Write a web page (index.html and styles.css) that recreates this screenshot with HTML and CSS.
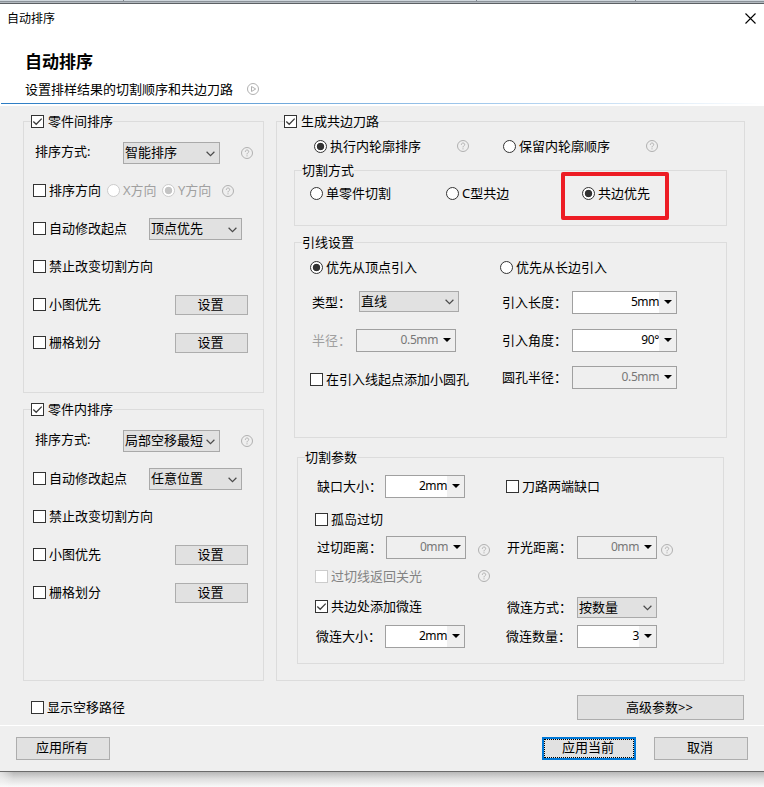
FILE: index.html
```html
<!DOCTYPE html>
<html lang="zh-CN">
<head>
<meta charset="utf-8">
<title>自动排序</title>
<link rel="stylesheet" href="styles.css">
</head>
<body>
<svg class="defs" width="0" height="0">
  <symbol id="help" viewBox="0 0 12 12"><circle cx="6" cy="6" r="5.5" fill="none" stroke="#b0b0b0"/><path d="M4.3 4.8C4.3 2.5 7.7 2.5 7.7 4.6C7.7 5.8 6 5.8 6 7.4M6 8.3V9.4" fill="none" stroke="#b0b0b0"/></symbol>
  <symbol id="tick" viewBox="0 0 11 11"><path d="M1.3 5.5L4.2 8.3L9.7 2.6" fill="none" stroke="#3c3c3c" stroke-width="1.3"/></symbol>
  <symbol id="chev" viewBox="0 0 9 6"><path d="M.6 .8L4.5 4.6L8.4 .8" fill="none" stroke="#4a4a4a" stroke-width="1.2"/></symbol>
</svg>
<div class="backdrop"><i></i><i></i><i></i></div>
<main class="dialog">
  <header class="header">
    <div class="titlebar">
      <span>自动排序</span>
      <svg class="close" viewBox="0 0 11 11"><path d="M.5 .5L10.5 10.5M10.5 .5L.5 10.5" stroke="#000" stroke-width="1.1"/></svg>
    </div>
    <h1>自动排序</h1>
    <p class="subtitle">设置排样结果的切割顺序和共边刀路
      <svg class="play" viewBox="0 0 12 12"><circle cx="6" cy="6" r="5.5" fill="none" stroke="#b0b0b0"/><path d="M4.5 3.5V8.5L8.7 6Z" fill="none" stroke="#b0b0b0"/></svg>
    </p>
    <div class="rule"></div>
  </header>

  <div class="panels">
    <div class="side">
      <section class="group between">
        <div class="legend"><label class="opt"><span class="box"><svg><use href="#tick"/></svg></span>零件间排序</label></div>
        <div class="row sort"><span class="name">排序方式:</span><div class="select"><span>智能排序</span><svg><use href="#chev"/></svg></div><svg class="help"><use href="#help"/></svg></div>
        <div class="row direction"><label class="opt"><span class="box"></span>排序方向</label><label class="opt off"><span class="dot"></span>X方向</label><label class="opt off"><span class="dot on"></span>Y方向</label><svg class="help"><use href="#help"/></svg></div>
        <div class="row start"><label class="opt"><span class="box"></span>自动修改起点</label><div class="select"><span>顶点优先</span><svg><use href="#chev"/></svg></div></div>
        <div class="row"><label class="opt"><span class="box"></span>禁止改变切割方向</label></div>
        <div class="row setup"><label class="opt"><span class="box"></span>小图优先</label><button>设置</button></div>
        <div class="row setup"><label class="opt"><span class="box"></span>栅格划分</label><button>设置</button></div>
      </section>
      <section class="group within">
        <div class="legend"><label class="opt"><span class="box"><svg><use href="#tick"/></svg></span>零件内排序</label></div>
        <div class="row sort"><span class="name">排序方式:</span><div class="select"><span>局部空移最短</span><svg><use href="#chev"/></svg></div><svg class="help"><use href="#help"/></svg></div>
        <div class="row start"><label class="opt"><span class="box"></span>自动修改起点</label><div class="select"><span>任意位置</span><svg><use href="#chev"/></svg></div></div>
        <div class="row"><label class="opt"><span class="box"></span>禁止改变切割方向</label></div>
        <div class="row setup"><label class="opt"><span class="box"></span>小图优先</label><button>设置</button></div>
        <div class="row setup"><label class="opt"><span class="box"></span>栅格划分</label><button>设置</button></div>
      </section>
    </div>

    <section class="group shared">
      <div class="legend"><label class="opt"><span class="box"><svg><use href="#tick"/></svg></span>生成共边刀路</label></div>
      <div class="line contour"><label class="opt"><span class="dot on"></span>执行内轮廓排序</label><svg class="help"><use href="#help"/></svg><label class="opt"><span class="dot"></span>保留内轮廓顺序</label><svg class="help"><use href="#help"/></svg></div>

      <section class="group method">
        <div class="legend"><span>切割方式</span></div>
        <div class="line modes"><label class="opt"><span class="dot"></span>单零件切割</label><label class="opt"><span class="dot"></span>C型共边</label><label class="opt"><span class="dot on"></span>共边优先</label></div>
        <div class="highlight"></div>
      </section>

      <section class="group lead">
        <div class="legend"><span>引线设置</span></div>
        <div class="line entry"><label class="opt"><span class="dot on"></span>优先从顶点引入</label><label class="opt"><span class="dot"></span>优先从长边引入</label></div>
        <div class="line type"><span class="name">类型：</span><div class="select"><span>直线</span><svg><use href="#chev"/></svg></div><span class="name">引入长度：</span><div class="spin"><span>5mm</span><i></i></div></div>
        <div class="line radius"><span class="name off">半径：</span><div class="spin dim"><span>0.5mm</span><i></i></div><span class="name">引入角度：</span><div class="spin"><span>90°</span><i></i></div></div>
        <div class="line hole"><label class="opt"><span class="box"></span>在引入线起点添加小圆孔</label><span class="name">圆孔半径：</span><div class="spin dim"><span>0.5mm</span><i></i></div></div>
      </section>

      <section class="group params">
        <div class="legend"><span>切割参数</span></div>
        <div class="line gap"><span class="name">缺口大小：</span><div class="spin"><span>2mm</span><i></i></div><label class="opt"><span class="box"></span>刀路两端缺口</label></div>
        <div class="line island"><label class="opt"><span class="box"></span>孤岛过切</label></div>
        <div class="line overcut"><span class="name">过切距离：</span><div class="spin dim"><span>0mm</span><i></i></div><svg class="help"><use href="#help"/></svg><span class="name">开光距离：</span><div class="spin dim"><span>0mm</span><i></i></div><svg class="help"><use href="#help"/></svg></div>
        <div class="line return"><label class="opt off dark"><span class="box"></span>过切线返回关光</label><svg class="help"><use href="#help"/></svg></div>
        <div class="line micro"><label class="opt"><span class="box"><svg><use href="#tick"/></svg></span>共边处添加微连</label><span class="name">微连方式：</span><div class="select"><span>按数量</span><svg><use href="#chev"/></svg></div></div>
        <div class="line size"><span class="name">微连大小：</span><div class="spin"><span>2mm</span><i></i></div><span class="name">微连数量：</span><div class="spin"><span>3</span><i></i></div></div>
      </section>
    </section>
  </div>

  <div class="extras"><label class="opt"><span class="box"></span>显示空移路径</label><button>高级参数&gt;&gt;</button></div>
  <footer class="actions"><button>应用所有</button><button class="primary">应用当前</button><button>取消</button></footer>
</main>
<div class="shadow"></div>
</body>
</html>
```
FILE: styles.css
```css
* { box-sizing: border-box; }
body {
  margin: 0;
  width: 764px;
  height: 787px;
  overflow: hidden;
  background: #fff;
  color: #000;
  font: 13px/21px "Noto Sans", "Noto Sans CJK SC", sans-serif;
  white-space: nowrap;
}
.defs { display: none; }
.backdrop {
  height: 4px;
  display: grid;
  grid-template-columns: 124px 353px 159px;
  background: linear-gradient(#cfd6dc 0 1px, #8b9299 1px 2px, #b4bac0 2px 3px, #5c6064 3px);
}
.backdrop i { height: 1px; border-right: 1px solid #7d858c; }
.dialog { height: 768px; background: #efefef; border-bottom: 1px solid #6b6b6b; }

.header { height: 102px; background: #fff; }
.titlebar {
  height: 30px;
  padding: 4px 8px 0 7px;
  display: flex;
  justify-content: space-between;
  font-size: 12px;
}
.close { width: 11px; height: 11px; margin-top: 5px; }
h1 { margin: 18px 0 0 25px; font-size: 17px; line-height: 20px; font-weight: 700; }
.subtitle { margin: 7px 0 0 25px; height: 21px; display: flex; gap: 14px; }
.play { width: 12px; height: 12px; margin-top: 4px; }
.rule { height: 1px; margin: 3px 0 0 1px; background: linear-gradient(90deg, #2b7cc4, #a9cdee 66%, #fff); }

.panels {
  height: 575px;
  padding: 15px 0 0 23px;
  display: grid;
  grid-template-columns: 241px 469px;
  column-gap: 12px;
}
.group { position: relative; border: 1px solid #dcdcdc; }
.between { height: 272px; }
.within { height: 272px; margin-top: 16px; }
.shared { height: 560px; }
.method { height: 56px; margin: 13px 0 0 17px; width: 433px; }
.lead { height: 196px; margin: 16px 0 0 17px; width: 433px; }
.params { height: 207px; margin: 19px 0 0 20px; width: 427px; }

.legend { height: 21px; margin: -11px 0 0 7px; display: flex; }
.legend > * { background: #efefef; }
.legend .opt { gap: 4px; }
.between .legend, .within .legend { margin-bottom: 2px; }

.opt { height: 21px; display: flex; align-items: center; gap: 3px; }
.box { width: 13px; height: 13px; border: 1px solid #333; background: #fff; display: flex; flex: none; }
.box svg { width: 11px; height: 11px; }
.dot {
  width: 13px;
  height: 13px;
  flex: none;
  border: 1px solid #333;
  border-radius: 50%;
  background: #fff;
}
.dot.on { background: radial-gradient(circle, #333 3.4px, #fff 4.1px); }
.off { color: #a0a0a0; }
.off .box, .off .dot { border-color: #ccc; }
.off .dot.on { background: radial-gradient(circle, #c4c4c4 3.4px, #fff 4.1px); }
.dark { color: #838383; }
.help { width: 12px; height: 12px; }

.row, .line { display: grid; align-items: start; justify-content: start; }
.row { height: 38px; padding-left: 9px; }
.row .opt, .row .select { margin-top: 8px; }
.row .name { margin-top: 7px; }
.row .help { margin-top: 13px; }
.row button { margin-top: 9px; height: 20px; width: 73px; }
.row.sort { padding-left: 11px; grid-template-columns: 88px 118px 12px; }
.direction { grid-template-columns: 74px 55px 60px 12px; }
.start { grid-template-columns: 116px 93px; }
.setup { grid-template-columns: 142px 73px; }
.sort .select { width: 97px; }

.select {
  height: 22px;
  padding: 0 4px 0 1px;
  display: flex;
  justify-content: space-between;
  align-items: center;
  border: 1px solid #a9a9a9;
  background: #e1e1e1;
}
.select span { line-height: 20px; margin-top: -2px; }
.select svg { width: 9px; height: 6px; flex: none; margin-top: 1px; }
.line .select { height: 21px; }

.spin {
  height: 23px;
  border: 1px solid #a0a0a0;
  background: #fff;
  display: grid;
  grid-template-columns: 1fr 17px;
  font-size: 12px;
  letter-spacing: -.4px;
}
.spin span { text-align: right; padding-right: 0; line-height: 19px; }
.spin i { background: #efefef; padding: 8px 0 0 5px; }
.spin i::before { content: ""; display: block; width: 8px; height: 4px; background: #000; clip-path: polygon(0 0, 100% 0, 50% 100%); }
.dim { background: #efefef; }
.dim span { color: #777; }

.line .name { margin-top: 1px; }
.line .help { margin-top: 4px; }
.contour { margin-top: 4px; padding-left: 37px; grid-template-columns: 143px 46px 143px 12px; }
.modes { margin-top: 2px; padding-left: 15px; grid-template-columns: 136px 136px auto; }
.highlight { position: absolute; left: 266px; top: 1px; width: 108px; height: 48px; border: 4px solid #ed1c24; border-radius: 2px; }
.entry { margin-top: 4px; padding-left: 15px; grid-template-columns: 190px auto; }
.type { margin-top: 13px; height: 23px; padding-left: 17px; grid-template-columns: 47px 100px 43px 70px 105px; }
.radius { margin-top: 15px; height: 23px; padding-left: 17px; grid-template-columns: 44px 100px 46px 70px 105px; }
.type .name:nth-of-type(2), .radius .name:nth-of-type(2), .size .name:nth-of-type(2) { grid-column: 4; }
.hole { margin-top: 14px; height: 23px; padding-left: 15px; grid-template-columns: 192px 70px 105px; }
.hole .opt { margin-top: 3px; }
.gap { margin-top: 7px; height: 23px; padding-left: 19px; grid-template-columns: 68px 80px 41px auto; }
.gap .opt { grid-column: 4; margin-top: 1px; }
.island { margin-top: 11px; padding-left: 17px; }
.overcut { margin-top: 6px; height: 23px; padding-left: 19px; grid-template-columns: 69px 80px 12px 12px 17px 70px 80px 4px 12px; }
.overcut .help { margin-top: 8px; grid-column: 4; }
.overcut .name:nth-of-type(2) { grid-column: 6; }
.overcut .help:last-child { grid-column: 9; }
.return { margin-top: 7px; padding-left: 17px; grid-template-columns: 163px 12px; }
.micro { margin-top: 10px; height: 21px; padding-left: 17px; grid-template-columns: 192px 70px 80px; }
.micro .opt { margin-top: -1px; }
.micro .name { margin-top: 0; }
.size { margin-top: 7px; height: 23px; padding-left: 18px; grid-template-columns: 69px 80px 41px 71px 80px; }

button {
  margin: 0;
  padding: 0 2px 2px 0;
  border: 1px solid #adadad;
  background: #e1e1e1;
  color: #000;
  font: inherit;
  line-height: 16px;
}
.extras { height: 44px; padding: 14px 20px 0 31px; display: flex; justify-content: space-between; }
.extras .opt { margin-top: 2px; }
.extras button { width: 167px; height: 25px; }
.actions {
  height: 46px;
  border-top: 1px solid #fff;
  padding: 11px 16px 0;
  display: flex;
  gap: 18px;
}
.actions button { width: 94px; height: 23px; padding-bottom: 3px; }
.actions .primary { margin-left: auto; border: 2px solid #0078d7; outline: 1px dotted #000; outline-offset: -3px; }
.shadow {
  height: 15px;
  background: radial-gradient(ellipse 14px 22px at 0 0, rgba(255,255,255,.6), rgba(255,255,255,0)), linear-gradient(#b8b8b8, #dedede 45%, #fafafa);
}
```
